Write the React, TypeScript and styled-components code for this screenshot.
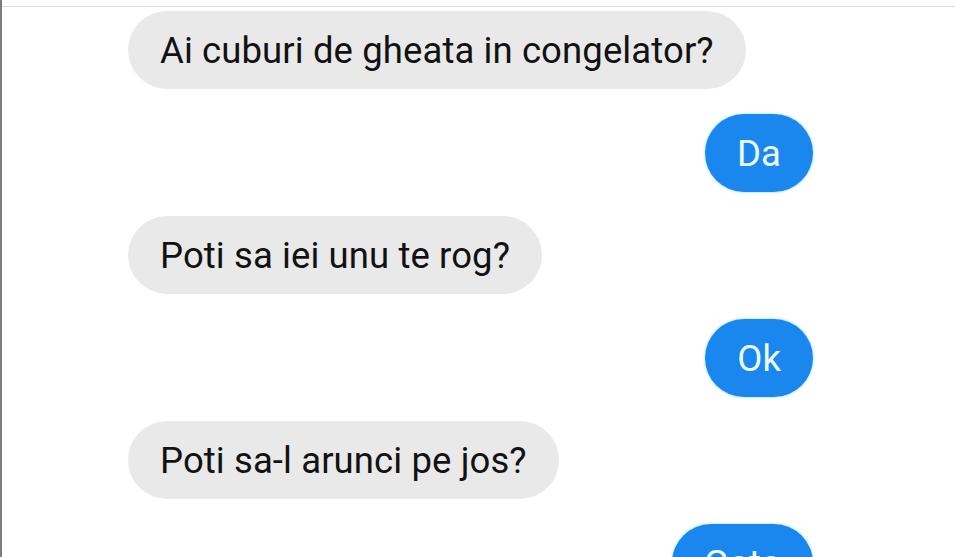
import React from "react";
import styled, { createGlobalStyle } from "styled-components";

const GlobalStyle = createGlobalStyle`
  html, body {
    margin: 0;
    padding: 0;
    background: #ffffff;
  }
  body {
    font-family: Roboto, "Noto Sans", "Liberation Sans", sans-serif;
  }
`;

const Page = styled.div`
  width: 955px;
  height: 557px;
  box-sizing: border-box;
  border-left: 2px solid #7c7c7c;
  padding-top: 6px;
  overflow: hidden;
  background: #ffffff;
`;

const TopRule = styled.div`
  height: 1px;
  background: #dedede;
`;

const Thread = styled.div`
  display: flex;
  flex-direction: column;
  gap: 24.5px;
  padding-top: 4px;
`;

const Row = styled.div<{ $out?: boolean }>`
  display: flex;
  justify-content: ${(p) => (p.$out ? "flex-end" : "flex-start")};
  padding-left: 126px;
  padding-right: 142px;
`;

const Bubble = styled.div<{ $out?: boolean }>`
  height: 78px;
  line-height: 80px;
  padding: 0 32px;
  border-radius: 39px;
  font-size: 36.5px;
  letter-spacing: 0.1px;
  font-weight: 400;
  white-space: nowrap;
  background: ${(p) => (p.$out ? "#1a87ee" : "#e9e9e9")};
  color: ${(p) => (p.$out ? "#eafcff" : "#121212")};
  box-shadow: ${(p) =>
    p.$out ? "0 0 2px 1px rgba(120, 215, 255, 0.45)" : "none"};
`;

const messages: { text: string; out?: boolean }[] = [
  { text: "Ai cuburi de gheata in congelator?" },
  { text: "Da", out: true },
  { text: "Poti sa iei unu te rog?" },
  { text: "Ok", out: true },
  { text: "Poti sa-l arunci pe jos?" },
  { text: "Gata", out: true },
];

export default function App() {
  return (
    <>
      <GlobalStyle />
      <Page>
        <TopRule />
        <Thread>
          {messages.map((m, i) => (
            <Row key={i} $out={m.out}>
              <Bubble $out={m.out}>{m.text}</Bubble>
            </Row>
          ))}
        </Thread>
      </Page>
    </>
  );
}
